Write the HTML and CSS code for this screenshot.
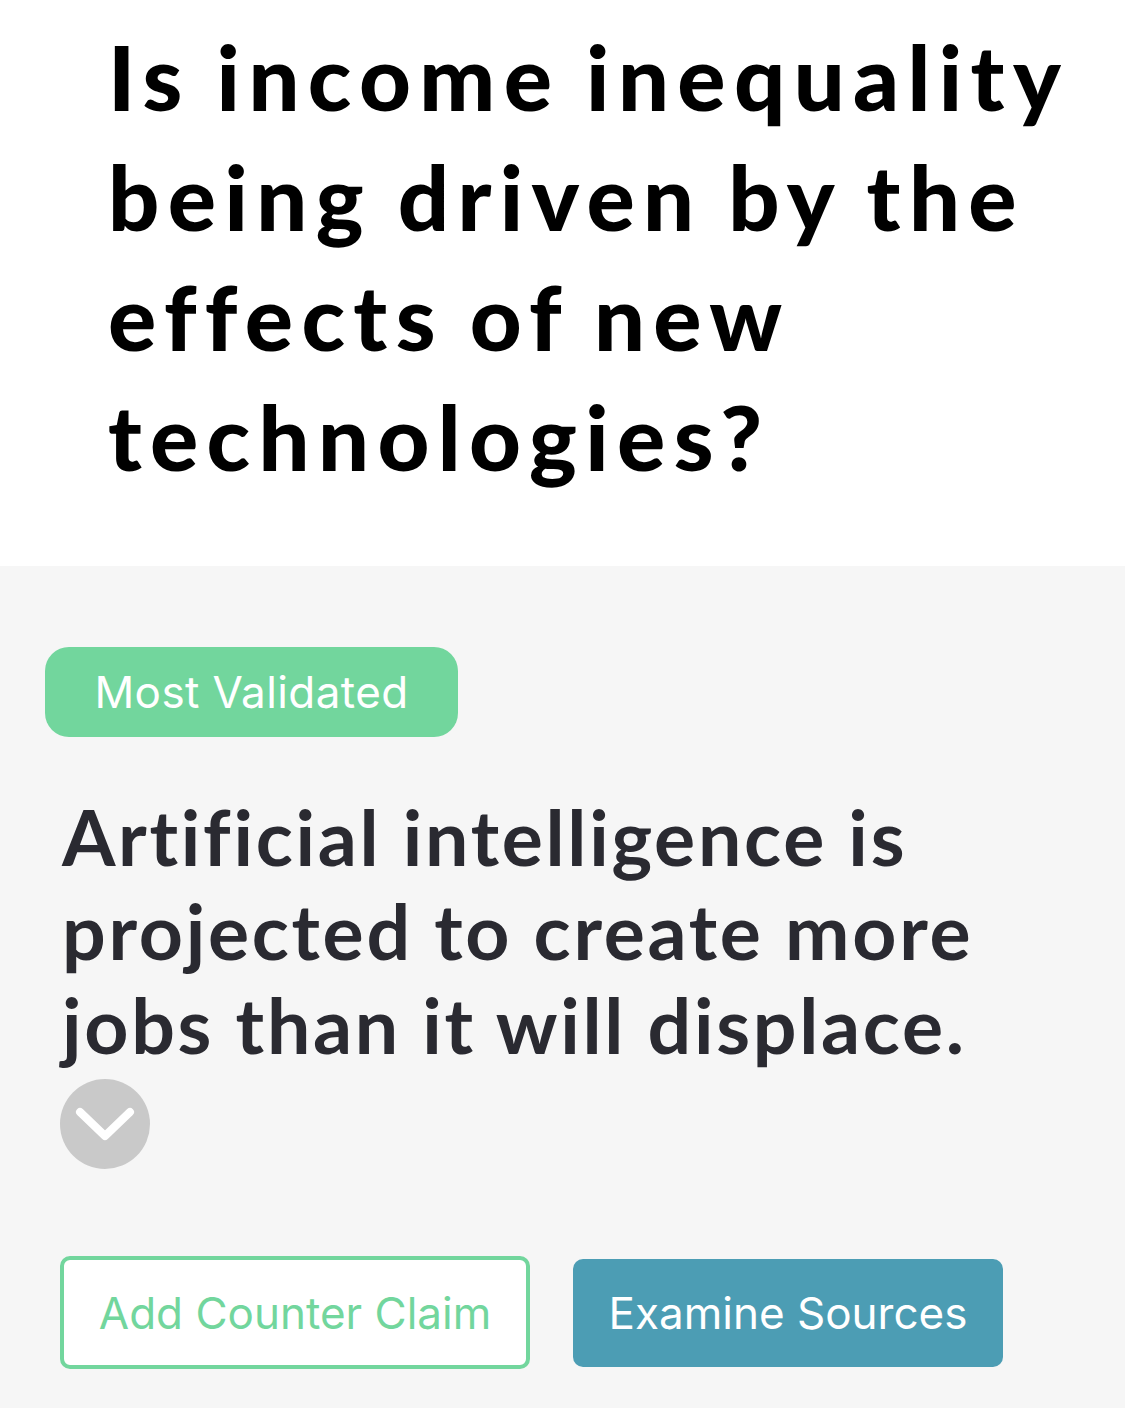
FILE: index.html
```html
<!DOCTYPE html>
<html>
<head>
<meta charset="utf-8">
<link rel="stylesheet" href="styles.css">
</head>
<body>
<header class="question">
  <h1 class="question-title">Is income inequality being driven by the effects of new technologies?</h1>
</header>
<main class="claims">
  <div class="badge">Most Validated</div>
  <p class="claim-text">Artificial intelligence is projected to create more jobs than it will displace.</p>
  <button class="expand" aria-label="Expand">
    <svg width="90" height="90" viewBox="0 0 90 90"><circle cx="45" cy="45" r="45" fill="#c9c9c9"/><path d="M20 33 L45 57 L70 33" fill="none" stroke="#fff" stroke-width="8" stroke-linecap="round" stroke-linejoin="round"/></svg>
  </button>
  <div class="actions">
    <button class="btn btn-outline">Add Counter Claim</button>
    <button class="btn btn-solid">Examine Sources</button>
  </div>
</main>
</body>
</html>
```
FILE: styles.css
```css
html, body {
  margin: 0;
  padding: 0;
  background: #f6f6f6;
}
body {
  width: 1125px;
  height: 1408px;
  overflow: hidden;
}
.question {
  background: #ffffff;
  height: 566px;
  box-sizing: border-box;
  padding: 16px 10px 0 108px;
}
.question-title {
  margin: 0;
  font-family: "Lato", "Noto Sans", sans-serif;
  font-weight: 900;
  font-size: 90px;
  line-height: 120px;
  letter-spacing: 8.4px;
  word-spacing: -4px;
  color: #000;
}
.claims {
  padding: 81px 0 0 45px;
}
.badge {
  display: inline-flex;
  align-items: center;
  justify-content: center;
  width: 413px;
  height: 90px;
  box-sizing: border-box;
  background: #72d69d;
  border-radius: 24px;
  color: #fff;
  font-family: "Inter", "Roboto", sans-serif;
  font-size: 44px;
  font-weight: 400;
  letter-spacing: 0.4px;
}
.claim-text {
  margin: 52px 0 0 17px;
  width: 1000px;
  font-family: "Lato", "Noto Sans", sans-serif;
  font-weight: 700;
  font-size: 77px;
  line-height: 94px;
  letter-spacing: 2.7px;
  color: #2a2a31;
}
.expand {
  display: block;
  margin: 8px 0 0 15px;
  padding: 0;
  border: 0;
  background: none;
  width: 90px;
  height: 90px;
}
.expand svg { display: block; }
.actions {
  display: flex;
  align-items: center;
  gap: 43px;
  margin: 87px 0 0 15px;
}
.btn {
  box-sizing: border-box;
  font-family: "Inter", "Roboto", sans-serif;
  font-size: 44px;
  font-weight: 400;
  border-radius: 10px;
  padding: 0;
}
.btn-outline {
  width: 470px;
  height: 113px;
  background: #fff;
  border: 4px solid #72d69d;
  color: #72d69d;
}
.btn-solid {
  width: 430px;
  height: 108px;
  background: #4c9db4;
  border: 0;
  color: #fff;
}
```
